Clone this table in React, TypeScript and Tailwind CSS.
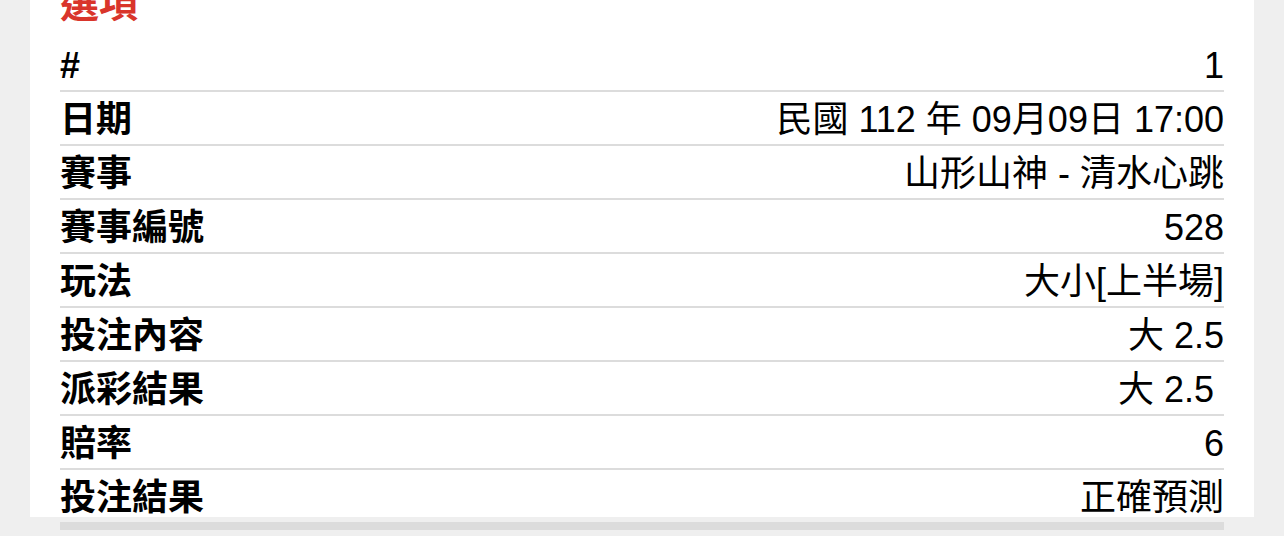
const rows = [
  { label: "#", value: "1" },
  { label: "日期", value: "民國 112 年 09月09日 17:00" },
  { label: "賽事", value: "山形山神 - 清水心跳" },
  { label: "賽事編號", value: "528" },
  { label: "玩法", value: "大小[上半場]" },
  { label: "投注內容", value: "大 2.5" },
  { label: "派彩結果", value: "大 2.5\u00a0" },
  { label: "賠率", value: "6" },
  { label: "投注結果", value: "正確預測" },
];

export default function App() {
  return (
    <div
      className="min-h-[536px] bg-[#efefef] px-[30px] overflow-hidden"
      style={{ fontFamily: '"Liberation Sans", "Noto Sans CJK TC", sans-serif' }}
    >
      <div className="bg-white px-[30px] pb-[6px] h-[536px]">
        <h2 className="-mt-[19px] mb-[11px] text-[39px] leading-[46px] font-bold text-[#d9352b]">
          選項
        </h2>
        <div className="border-b-[8px] border-[#dcdcdc]">
          {rows.map(({ label, value }, i) => (
            <div
              key={label}
              className={
                "flex items-center justify-between pt-[4px] text-[36px] leading-[44px] text-black " +
                (i > 0 ? "h-[54px] border-t-2 border-[#dcdcdc]" : "h-[52px]")
              }
            >
              <span className="font-bold">{label}</span>
              <span className="whitespace-pre">{value}</span>
            </div>
          ))}
        </div>
      </div>
    </div>
  );
}
